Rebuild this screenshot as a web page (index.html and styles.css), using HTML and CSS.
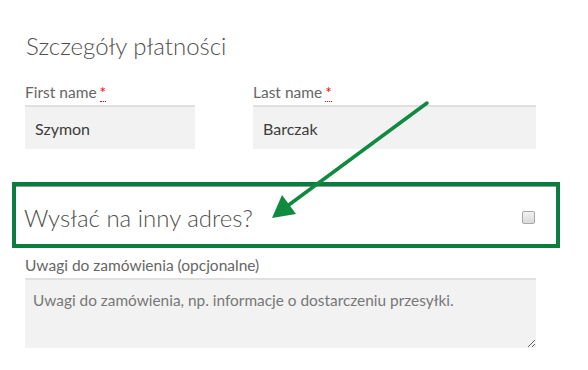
FILE: index.html
```html
<!DOCTYPE html>
<html lang="pl">
<head>
    <meta charset="UTF-8">
    <meta name="viewport" content="width=device-width, initial-scale=1.0">
    <title>Szczegóły płatności</title>
    <link rel="stylesheet" href="styles.css">
</head>
<body>
<main class="checkout">
    <h3 class="section-title">Szczegóły płatności</h3>

    <!-- Billing names -->
    <div class="name-row">
        <p class="field field-first">
            <label for="first-name">First name <abbr class="required" title="required">*</abbr></label>
            <input type="text" id="first-name" class="input-text" value="Szymon">
        </p>
        <p class="field field-last">
            <label for="last-name">Last name <abbr class="required" title="required">*</abbr></label>
            <input type="text" id="last-name" class="input-text" value="Barczak">
        </p>
    </div>

    <!-- Ship to a different address (highlighted) -->
    <div class="ship-box">
        <h3 class="ship-title">Wysłać na inny adres?</h3>
        <input type="checkbox" class="ship-check">
    </div>

    <!-- Order notes -->
    <p class="field field-notes">
        <label for="order-notes">Uwagi do zamówienia (opcjonalne)</label>
        <textarea id="order-notes" class="input-text notes" placeholder="Uwagi do zamówienia, np. informacje o dostarczeniu przesyłki."></textarea>
    </p>
</main>

<svg class="arrow" width="588" height="370" viewBox="0 0 588 370">
    <line x1="427" y1="103" x2="286" y2="207" stroke="#108a3f" stroke-width="3.5" stroke-linecap="round"/>
    <polygon points="272,218 282,195 296,214" fill="#108a3f"/>
</svg>
</body>
</html>
```

FILE: styles.css
```css
/* General Styles */
body {
    margin: 0;
    padding: 0;
    background: #fff;
    font-family: Lato, "Open Sans", sans-serif;
    color: #666;
}
.checkout {
    width: 511px;
    padding: 31px 0 0 25px;
}
.section-title {
    margin: 0 0 22px 1px;
    font-size: 24px;
    font-weight: 300;
    color: #505050;
    line-height: 30px;
}

/* Fields */
.name-row {
    display: flex;
    gap: 58px;
}
.field {
    margin: 0;
    display: flex;
    flex-direction: column;
}
.field-first {
    width: 170px;
}
.field-last {
    width: 283px;
}
.field label {
    font-size: 15.5px;
    line-height: 18px;
    margin-bottom: 4px;
    color: #666;
}
.required {
    color: red;
    text-decoration: none;
    border-bottom: 1px dotted red;
    margin-left: -1px;
}
.input-text {
    box-sizing: border-box;
    width: 100%;
    height: 44px;
    border: none;
    background: #f2f2f2;
    box-shadow: inset 0 2px 0 #e0e0e0;
    padding: 2px 10px 0;
    font-family: inherit;
    font-size: 16px;
    color: #3d3d3d;
    outline: none;
}

/* Highlighted shipping box */
.ship-box {
    display: flex;
    align-items: center;
    justify-content: space-between;
    height: 58px;
    margin: 33px -24px 8px -13px;
    padding: 0 21px 0 8px;
    border: 4px solid #0b7d3e;
    box-shadow: inset 0 1px 0 #999;
}
.ship-title {
    margin: 4px 0 0;
    font-size: 24px;
    font-weight: 300;
    color: #505050;
}
.ship-check {
    appearance: none;
    box-sizing: border-box;
    margin: 4px 0 0;
    width: 13px;
    height: 13px;
    border: 1px solid #a8a8a8;
    border-radius: 2px;
    background: linear-gradient(#f2f2f2, #d9d9d9);
}

.field-notes label {
    margin-bottom: 4px;
}
.notes {
    height: 70px;
    padding: 12px 8px 6px;
    resize: vertical;
    font-size: 15.4px;
    line-height: 20px;
}
.notes::placeholder {
    color: #777;
}

/* Annotation arrow */
.arrow {
    position: absolute;
    top: 0;
    left: 0;
    pointer-events: none;
}
```
